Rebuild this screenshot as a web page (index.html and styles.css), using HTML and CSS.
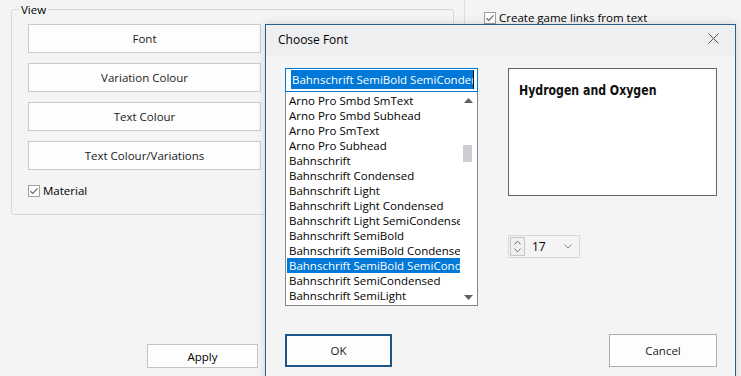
FILE: index.html
```html
<!DOCTYPE html>
<html lang="en">
<head>
    <meta charset="UTF-8">
    <meta name="viewport" content="width=device-width, initial-scale=1.0">
    <title>Choose Font</title>
    <link rel="stylesheet" href="styles.css">
</head>
<body>
  <div class="page">
    <div class="settings-col">
      <fieldset class="view-group">
        <legend>View</legend>
        <div class="group-inner">
          <button class="wide-btn">Font</button>
          <button class="wide-btn">Variation Colour</button>
          <button class="wide-btn">Text Colour</button>
          <button class="wide-btn">Text Colour/Variations</button>
          <label class="check">
            <svg class="check-box" width="12" height="12" viewBox="0 0 12 12"><rect x="0.5" y="0.5" width="11" height="11" fill="#fff" stroke="#a0a0a0"/><path d="M2.5 6.2 L4.8 8.4 L9.5 3.4" fill="none" stroke="#6b6b6b" stroke-width="1.2"/></svg>
            Material
          </label>
        </div>
      </fieldset>
      <button class="apply-btn">Apply</button>
    </div>
    <div class="options-col">
      <label class="check">
        <svg class="check-box" width="12" height="12" viewBox="0 0 12 12"><rect x="0.5" y="0.5" width="11" height="11" fill="#fff" stroke="#a0a0a0"/><path d="M2.5 6.2 L4.8 8.4 L9.5 3.4" fill="none" stroke="#6b6b6b" stroke-width="1.2"/></svg>
        Create game links from text
      </label>
    </div>
  </div>

  <div class="font-dialog">
    <div class="dialog-title">
      <span>Choose Font</span>
      <svg class="close-icon" width="11" height="11" viewBox="0 0 11 11"><path d="M0.5 0.5 L10.5 10.5 M10.5 0.5 L0.5 10.5" stroke="#555" stroke-width="1"/></svg>
    </div>
    <div class="dialog-body">
      <div class="dialog-grid">
        <div class="font-picker">
          <div class="font-input"><span class="font-sel">Bahnschrift SemiBold SemiConden</span></div>
          <div class="font-list">
            <ul class="font-items">
              <li>Arno Pro Smbd SmText</li>
              <li>Arno Pro Smbd Subhead</li>
              <li>Arno Pro SmText</li>
              <li>Arno Pro Subhead</li>
              <li>Bahnschrift</li>
              <li>Bahnschrift Condensed</li>
              <li>Bahnschrift Light</li>
              <li>Bahnschrift Light Condensed</li>
              <li>Bahnschrift Light SemiCondensed</li>
              <li>Bahnschrift SemiBold</li>
              <li>Bahnschrift SemiBold Condensed</li>
              <li class="selected">Bahnschrift SemiBold SemiCondensed</li>
              <li>Bahnschrift SemiCondensed</li>
              <li>Bahnschrift SemiLight</li>
            </ul>
            <div class="scrollbar">
              <svg width="9" height="5" viewBox="0 0 9 5"><path d="M0 5 L4.5 0 L9 5 Z" fill="#606060"/></svg>
              <div class="scroll-track"><div class="scroll-thumb"></div></div>
              <svg width="9" height="5" viewBox="0 0 9 5"><path d="M0 0 L4.5 5 L9 0 Z" fill="#606060"/></svg>
            </div>
          </div>
        </div>
        <div class="preview-col">
          <div class="preview"><span class="preview-text">Hydrogen and Oxygen</span></div>
          <div class="size-spin">
            <div class="spin-arrows">
              <svg width="7" height="5" viewBox="0 0 7 5"><path d="M0.5 4.5 L3.5 1 L6.5 4.5" fill="none" stroke="#777"/></svg>
              <svg width="7" height="5" viewBox="0 0 7 5"><path d="M0.5 0.5 L3.5 4 L6.5 0.5" fill="none" stroke="#777"/></svg>
            </div>
            <span class="spin-value">17</span>
            <svg class="spin-drop" width="8" height="5" viewBox="0 0 8 5"><path d="M0.5 0.5 L4 4 L7.5 0.5" fill="none" stroke="#888"/></svg>
          </div>
        </div>
      </div>
      <div class="dialog-buttons">
        <button class="dlg-btn ok-btn">OK</button>
        <button class="dlg-btn">Cancel</button>
      </div>
    </div>
  </div>
</body>
</html>
```

FILE: styles.css
```css
* {
  margin: 0;
  padding: 0;
  box-sizing: border-box;
  font-family: 'Segoe UI', 'Open Sans', sans-serif;
}

body {
  background-color: #f4f4f4;
  color: #000;
  font-size: 11.5px;
  overflow: hidden;
  height: 376px;
}

.page {
  display: flex;
  height: 376px;
}

.settings-col {
  width: 465px;
  padding: 2px 10px 0 11px;
  border-right: 1px solid #dcdcdc;
}

.view-group {
  border: 1px solid #d9d9d9;
  border-radius: 3px;
  padding: 0;
  margin: 0;
}

.view-group legend {
  margin-left: 7px;
  padding: 0 2px;
  line-height: 15px;
}

.group-inner {
  padding: 7px 0 16px 16px;
  display: flex;
  flex-direction: column;
  align-items: flex-start;
}

.wide-btn {
  width: 233px;
  height: 29px;
  margin-bottom: 10px;
  background-color: #fdfdfd;
  border: 1px solid #cacaca;
  font-size: 11.5px;
  color: #1a1a1a;
}

.check {
  display: flex;
  align-items: center;
  gap: 3px;
  line-height: 15px;
  margin-top: 3px;
}

.check-box {
  display: block;
  flex: none;
}

.apply-btn {
  margin: 129px 0 0 136px;
  width: 111px;
  height: 24px;
  background-color: #fdfdfd;
  border: 1px solid #c4c4c4;
  font-size: 11.5px;
}

.options-col {
  padding: 10px 0 0 19px;
}

.options-col .check {
  margin-top: 0;
}

.font-dialog {
  position: absolute;
  left: 265px;
  top: 24px;
  width: 471px;
  height: 370px;
  background-color: #f4f4f4;
  border: 1px solid #2d5f8e;
  box-shadow: 0 0 8px rgba(0, 0, 0, 0.15);
}

.dialog-title {
  height: 31px;
  background-color: #eeeff1;
  display: flex;
  align-items: center;
  justify-content: space-between;
  padding: 0 16px 2px 12px;
  font-size: 12px;
}

.close-icon {
  display: block;
  margin-top: -3px;
}

.dialog-body {
  padding: 12px 18px 0 19px;
}

.dialog-grid {
  display: grid;
  grid-template-columns: 193px 209px;
  column-gap: 30px;
}

.font-input {
  height: 24px;
  border: 1px solid #0078d7;
  background-color: #fff;
  padding: 1px 0 0 5px;
  overflow: hidden;
  white-space: nowrap;
}

.font-sel {
  display: inline-block;
  background-color: #0078d7;
  color: #fff;
  line-height: 19px;
  padding: 0 1px;
  width: 183px;
  overflow: hidden;
  border-right: 1px solid #111;
}

.font-list {
  height: 214px;
  border: 1px solid #828790;
  border-top: none;
  background-color: #fff;
  display: flex;
}

.font-items {
  list-style: none;
  flex: 1;
  padding-top: 1px;
  overflow: hidden;
}

.font-items li {
  height: 15px;
  line-height: 15px;
  padding-left: 2px;
  margin-left: 1px;
  white-space: nowrap;
  overflow: hidden;
  color: #000;
}

.font-items li.selected {
  background-color: #0078d7;
  color: #fff;
}

.scrollbar {
  width: 17px;
  display: flex;
  flex-direction: column;
  align-items: center;
  padding: 6px 0 5px;
}

.scroll-track {
  flex: 1;
  width: 100%;
  padding: 42px 0 0 3px;
}

.scroll-thumb {
  width: 9px;
  height: 17px;
  background-color: #cdcdd3;
}

.preview {
  height: 128px;
  background-color: #fff;
  border: 1px solid #646464;
  padding: 11px 10px;
  line-height: 20px;
  color: #111;
}

.preview-text {
  display: inline-block;
  font-family: 'DejaVu Sans Condensed', 'DejaVu Sans', sans-serif;
  font-weight: bold;
  font-size: 14px;
  transform: scaleX(0.87);
  transform-origin: left center;
  white-space: nowrap;
}

.size-spin {
  margin-top: 39px;
  width: 72px;
  height: 23px;
  border: 1px solid #d9d9d9;
  display: flex;
  align-items: center;
  padding-left: 1px;
}

.spin-arrows {
  width: 15px;
  height: 19px;
  border: 1px solid #c7c7c7;
  background-color: #f0f0f0;
  display: flex;
  flex-direction: column;
  align-items: center;
  justify-content: space-around;
  padding: 1px 0;
}

.spin-arrows svg {
  display: block;
}

.spin-value {
  margin-left: 7px;
  flex: 1;
  font-size: 12px;
}

.spin-drop {
  margin-right: 7px;
}

.dialog-buttons {
  display: flex;
  justify-content: space-between;
  margin-top: 28px;
}

.dlg-btn {
  width: 108px;
  height: 33px;
  background-color: #fdfdfd;
  border: 1px solid #adadad;
  font-size: 11.5px;
  color: #1a1a1a;
}

.ok-btn {
  width: 107px;
  border: 2px solid #1e5589;
}
```
